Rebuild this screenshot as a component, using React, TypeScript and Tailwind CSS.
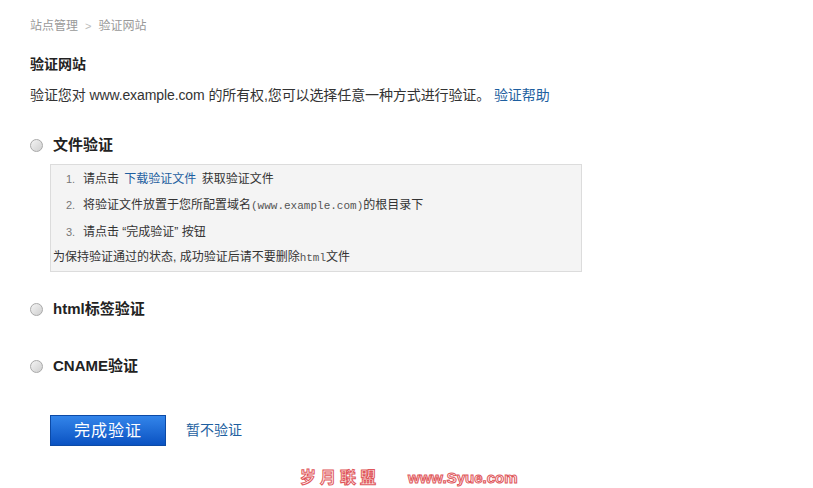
import React, { useState } from 'react';

const cjk = "font-['Liberation_Sans','Noto_Sans_CJK_SC',sans-serif]";
const mono = "font-['Liberation_Mono','Noto_Sans_CJK_SC',monospace]";

const Radio = ({ checked, onClick }: { checked: boolean; onClick: () => void }) => (
  <button
    onClick={onClick}
    className="w-[13px] h-[13px] rounded-full border border-[#a9a9a9] bg-gradient-to-br from-[#f4f4f4] to-[#cfcfcf] flex items-center justify-center"
  >
    {checked && <span className="w-[5px] h-[5px] rounded-full bg-[#333]" />}
  </button>
);

const App = () => {
  const [method, setMethod] = useState<string>('');

  return (
    <div className={`bg-white min-h-screen w-[813px] h-[488px] overflow-hidden pl-[30px] pt-4 text-[#333] ${cjk}`}>
      <nav className="flex items-center gap-[7px] text-[12px] leading-[20px] text-[#999]">
        <span>站点管理</span>
        <span className="text-[#bbb] text-[11px]">&gt;</span>
        <span>验证网站</span>
      </nav>

      <h1 className="mt-[18px] text-[14px] leading-[20px] font-bold text-[#222]">验证网站</h1>
      <p className="mt-[11px] text-[14px] leading-[20px] tracking-[-0.1px]">
        验证您对 www.example.com 的所有权,您可以选择任意一种方式进行验证。{' '}
        <a className="text-[#1e5fa0] cursor-pointer">验证帮助</a>
      </p>

      <div className="mt-[30px] flex items-center h-[20px]">
        <Radio checked={method === 'file'} onClick={() => setMethod('file')} />
        <span className="ml-[10px] text-[15px] font-bold text-[#222]">文件验证</span>
      </div>

      <div className="mt-[9px] ml-[20px] w-[532px] border border-[#dcdcdc] bg-[#f4f4f4] text-[12px] leading-[26px]">
        <ol className="pl-[15px] pt-px">
          <li className="flex">
            <span className="w-[17px] text-[11px] text-[#777]">1.</span>
            <span>
              请点击 <a className="text-[#1e5fa0] mx-[2px] cursor-pointer">下载验证文件</a> 获取验证文件
            </span>
          </li>
          <li className="flex">
            <span className="w-[17px] text-[11px] text-[#777]">2.</span>
            <span>
              将验证文件放置于您所配置域名<span className={`${mono} text-[11px] text-[#555]`}>(www.example.com)</span>的根目录下
            </span>
          </li>
          <li className="flex">
            <span className="w-[17px] text-[11px] text-[#777]">3.</span>
            <span>请点击 “完成验证” 按钮</span>
          </li>
        </ol>
        <p className="pl-[2px] leading-[25px]">
          为保持验证通过的状态, 成功验证后请不要删除<span className={`${mono} text-[11px] text-[#555]`}>html</span>文件
        </p>
      </div>

      <div className="mt-[27px] flex items-center h-[20px]">
        <Radio checked={method === 'html'} onClick={() => setMethod('html')} />
        <span className="ml-[10px] text-[15px] font-bold text-[#222]">html标签验证</span>
      </div>

      <div className="mt-[37px] flex items-center h-[20px]">
        <Radio checked={method === 'cname'} onClick={() => setMethod('cname')} />
        <span className="ml-[10px] text-[15px] font-bold text-[#222]">CNAME验证</span>
      </div>

      <div className="mt-[39px] ml-[20px] flex items-center gap-[20px]">
        <button className="w-[116px] h-[31px] border border-[#0c4aa6] bg-gradient-to-b from-[#3385ea] to-[#0a52c2] text-white text-[16px] leading-[29px] tracking-[1px]">
          完成验证
        </button>
        <a className="text-[14px] text-[#1e5fa0] cursor-pointer">暂不验证</a>
      </div>

      <div className="mt-[21px] ml-[270px] flex items-center gap-[28px] font-bold leading-[22px] text-[#fff4f4] [-webkit-text-stroke:1px_#e0575b]">
        <span className="text-[16px] tracking-[4px]">岁月联盟</span>
        <span className="text-[15px]">www.Syue.com</span>
      </div>
    </div>
  );
};

export default App;
